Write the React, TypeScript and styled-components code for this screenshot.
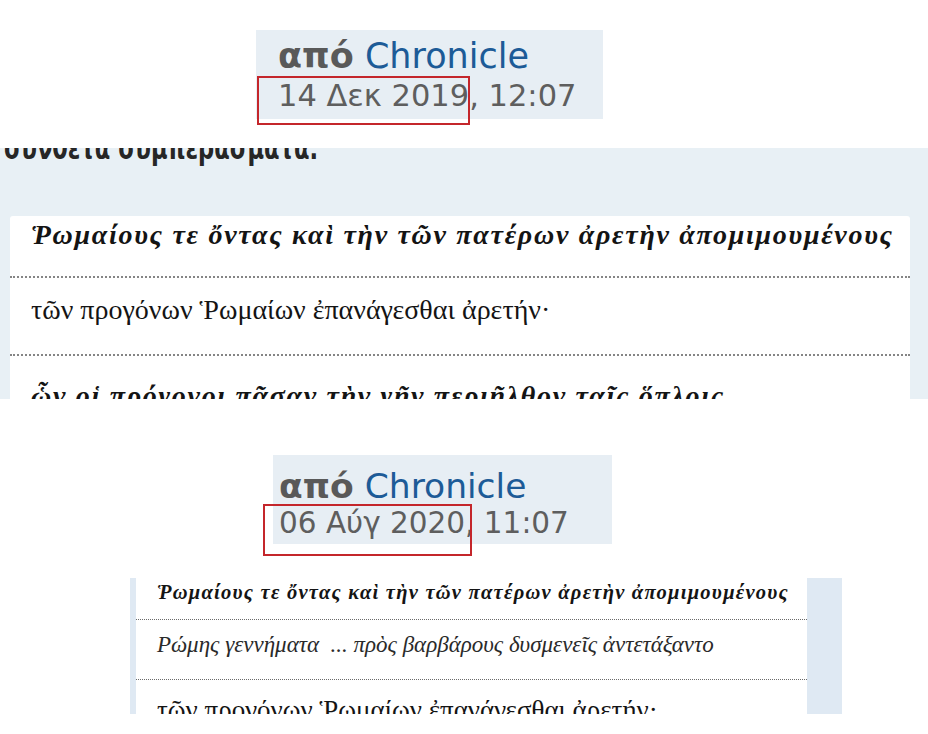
import styled, { createGlobalStyle } from 'styled-components'

const GlobalStyle = createGlobalStyle`
  html, body {
    margin: 0;
    padding: 0;
    background: #ffffff;
  }

  body {
    width: 928px;
    height: 734px;
    overflow: hidden;
  }
`

type Post = {
  date: string
  time: string
  offset: number
  width: number
  padLeft: number
  padTop: number
  nameSize: number
  stampSize: number
  stampLine: number
  markLeft: number
  markTop: number
  markWidth: number
  markHeight: number
}

const posts: Post[] = [
  {
    date: '14 Δεκ 2019',
    time: '12:07',
    offset: 256,
    width: 347,
    padLeft: 22,
    padTop: 6,
    nameSize: 35,
    stampSize: 30.5,
    stampLine: 39,
    markLeft: 1,
    markTop: 46,
    markWidth: 213,
    markHeight: 49,
  },
  {
    date: '06 Αύγ 2020',
    time: '11:07',
    offset: 273,
    width: 339,
    padLeft: 6,
    padTop: 11,
    nameSize: 34.5,
    stampSize: 29.5,
    stampLine: 34,
    markLeft: -10,
    markTop: 49,
    markWidth: 209,
    markHeight: 52,
  },
]

type Kind = 'bold' | 'plain' | 'italic'
type Line = { text: string; kind: Kind; size: number; spacing: number; pad: number }

const firstQuote: Line[] = [
  { text: 'Ῥωμαίους τε ὄντας καὶ τὴν τῶν πατέρων ἀρετὴν ἀπομιμουμένους', kind: 'bold', size: 28, spacing: 1.7, pad: 5 },
  { text: 'τῶν προγόνων Ῥωμαίων ἐπανάγεσθαι ἀρετήν·', kind: 'plain', size: 28, spacing: 0, pad: 18 },
  { text: 'ὧν οἱ πρόγονοι πᾶσαν τὴν γῆν περιῆλθον ταῖς ὅπλοις', kind: 'bold', size: 28, spacing: 1.7, pad: 26 },
]

const secondQuote: Line[] = [
  { text: 'Ῥωμαίους τε ὄντας καὶ τὴν τῶν πατέρων ἀρετὴν ἀπομιμουμένους', kind: 'bold', size: 20.5, spacing: 1.25, pad: 4 },
  { text: 'Ρώμης γεννήματα  ... πρὸς βαρβάρους δυσμενεῖς ἀντετάξαντο', kind: 'italic', size: 23, spacing: 0, pad: 13 },
  { text: 'τῶν προγόνων Ῥωμαίων ἐπανάγεσθαι ἀρετήν·', kind: 'plain', size: 27, spacing: 0, pad: 17 },
]

function PostMeta({ post, top }: { post: Post; top: number }) {
  return (
    <MetaBox
      $offset={post.offset}
      $width={post.width}
      $top={top}
      $padLeft={post.padLeft}
      $padTop={post.padTop}
    >
      <Author $size={post.nameSize}>
        <By>από</By> <Name>Chronicle</Name>
      </Author>
      <Stamp $size={post.stampSize} $line={post.stampLine}>
        {post.date}, {post.time}
      </Stamp>
      <Mark
        $left={post.markLeft}
        $top={post.markTop}
        $width={post.markWidth}
        $height={post.markHeight}
      />
    </MetaBox>
  )
}

export default function App() {
  return (
    <>
      <GlobalStyle />
      <Page>
        <PostMeta post={posts[0]} top={30} />

        <Band>
          <Heading>σύνθετα συμπεράσματα.</Heading>
          <Card>
            {firstQuote.map((line, i) => (
              <WideRow key={i} $index={i} $pad={line.pad}>
                <Verse $kind={line.kind} $size={line.size} $spacing={line.spacing}>
                  {line.text}
                </Verse>
              </WideRow>
            ))}
          </Card>
        </Band>

        <PostMeta post={posts[1]} top={56} />

        <Panel>
          <Strip $width={6} />
          <NarrowCard>
            {secondQuote.map((line, i) => (
              <NarrowRow key={i} $index={i} $pad={line.pad}>
                <Verse $kind={line.kind} $size={line.size} $spacing={line.spacing}>
                  {line.text}
                </Verse>
              </NarrowRow>
            ))}
          </NarrowCard>
          <Strip $width={35} />
        </Panel>
      </Page>
    </>
  )
}

const Page = styled.div`
  display: flex;
  flex-direction: column;
  width: 928px;
  height: 734px;
  overflow: hidden;
`

const MetaBox = styled.div<{
  $offset: number
  $width: number
  $top: number
  $padLeft: number
  $padTop: number
}>`
  position: relative;
  flex: none;
  box-sizing: border-box;
  margin-left: ${({ $offset }) => $offset}px;
  margin-top: ${({ $top }) => $top}px;
  width: ${({ $width }) => $width}px;
  height: 89px;
  padding: ${({ $padTop, $padLeft }) => `${$padTop}px 0 0 ${$padLeft}px`};
  background: #e7eef4;
  font-family: 'DejaVu Sans', Verdana, sans-serif;
  color: #5b5b5b;
`

const Author = styled.div<{ $size: number }>`
  font-size: ${({ $size }) => $size}px;
  line-height: 40px;
  white-space: nowrap;
`

const By = styled.span`
  font-weight: bold;
  color: #595959;
`

const Name = styled.span`
  color: #1d5b97;
`

const Stamp = styled.div<{ $size: number; $line: number }>`
  font-size: ${({ $size }) => $size}px;
  line-height: ${({ $line }) => $line}px;
  white-space: nowrap;
  color: #5e5e5e;
`

const Mark = styled.div<{ $left: number; $top: number; $width: number; $height: number }>`
  position: absolute;
  left: ${({ $left }) => $left}px;
  top: ${({ $top }) => $top}px;
  width: ${({ $width }) => $width}px;
  height: ${({ $height }) => $height}px;
  box-sizing: border-box;
  border: 2px solid #c4262b;
`

const Band = styled.section`
  flex: none;
  margin-top: 29px;
  height: 251px;
  overflow: hidden;
  background: #e8f0f5;
`

const Heading = styled.div`
  margin-top: -18px;
  padding-left: 5px;
  font-family: 'DejaVu Sans Condensed', 'Liberation Sans', sans-serif;
  font-weight: bold;
  font-size: 31px;
  line-height: 36px;
  color: #262626;
  white-space: nowrap;
  transform: scaleX(0.81);
  transform-origin: left center;
`

const Card = styled.div`
  margin: 50px 0 0 10px;
  width: 900px;
  background: #ffffff;
  border-radius: 3px 3px 0 0;
`

const WideRow = styled.div<{ $index: number; $pad: number }>`
  box-sizing: border-box;
  height: ${({ $index }) => ($index === 0 ? 62 : 78)}px;
  padding: ${({ $pad }) => $pad}px 0 0 21px;
  border-bottom: ${({ $index }) => ($index < 2 ? '2px dotted #858585' : 'none')};
  white-space: nowrap;
`

const Verse = styled.span<{ $kind: Kind; $size: number; $spacing: number }>`
  display: inline-block;
  font-family: 'Liberation Serif', 'DejaVu Serif', serif;
  font-size: ${({ $size }) => $size}px;
  letter-spacing: ${({ $spacing }) => $spacing}px;
  line-height: 1;
  white-space: pre;
  font-weight: ${({ $kind }) => ($kind === 'bold' ? 'bold' : 'normal')};
  font-style: ${({ $kind }) => ($kind === 'plain' ? 'normal' : 'italic')};
  color: ${({ $kind }) => ($kind === 'italic' ? '#2a2a2a' : '#141414')};
`

const Panel = styled.section`
  flex: none;
  display: flex;
  margin: 34px 0 0 130px;
  width: 712px;
  height: 136px;
  overflow: hidden;
`

const Strip = styled.div<{ $width: number }>`
  flex: 0 0 ${({ $width }) => $width}px;
  background: #dfe9f3;
`

const NarrowCard = styled.div`
  flex: 1;
  background: #ffffff;
`

const NarrowRow = styled.div<{ $index: number; $pad: number }>`
  box-sizing: border-box;
  height: ${({ $index }) => ($index === 0 ? 42 : 60)}px;
  padding: ${({ $pad }) => $pad}px 0 0 21px;
  border-bottom: ${({ $index }) => ($index < 2 ? '1px dotted #6a6a6a' : 'none')};
  white-space: nowrap;
`
